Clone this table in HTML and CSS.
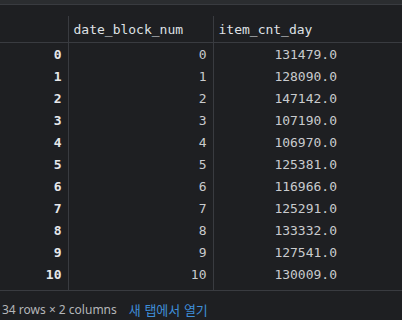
FILE: index.html
```html
<!DOCTYPE html>
<html lang="ko">
<head>
    <meta charset="UTF-8">
    <title>DataFrame</title>
    <link rel="stylesheet" href="styles.css">
</head>
<body>

<div class="topbar"></div>

<div class="frame">
    <table class="df">
        <colgroup>
            <col class="c-index">
            <col class="c-date">
            <col class="c-cnt">
            <col>
        </colgroup>
        <thead>
            <tr>
                <th class="sep"></th>
                <th class="sep">date_block_num</th>
                <th>item_cnt_day</th>
                <th></th>
            </tr>
        </thead>
        <tbody>
            <tr><td class="idx sep">0</td><td class="num sep">0</td><td class="num">131479.0</td><td></td></tr>
            <tr><td class="idx sep">1</td><td class="num sep">1</td><td class="num">128090.0</td><td></td></tr>
            <tr><td class="idx sep">2</td><td class="num sep">2</td><td class="num">147142.0</td><td></td></tr>
            <tr><td class="idx sep">3</td><td class="num sep">3</td><td class="num">107190.0</td><td></td></tr>
            <tr><td class="idx sep">4</td><td class="num sep">4</td><td class="num">106970.0</td><td></td></tr>
            <tr><td class="idx sep">5</td><td class="num sep">5</td><td class="num">125381.0</td><td></td></tr>
            <tr><td class="idx sep">6</td><td class="num sep">6</td><td class="num">116966.0</td><td></td></tr>
            <tr><td class="idx sep">7</td><td class="num sep">7</td><td class="num">125291.0</td><td></td></tr>
            <tr><td class="idx sep">8</td><td class="num sep">8</td><td class="num">133332.0</td><td></td></tr>
            <tr><td class="idx sep">9</td><td class="num sep">9</td><td class="num">127541.0</td><td></td></tr>
            <tr><td class="idx sep">10</td><td class="num sep">10</td><td class="num">130009.0</td><td></td></tr>
            <tr class="spacer"><td class="sep"></td><td class="sep"></td><td></td><td></td></tr>
        </tbody>
    </table>
</div>

<div class="footer">
    <span class="shape">34 rows × 2 columns</span>
    <a href="#" class="open-link">새 탭에서 열기</a>
</div>

</body>
</html>
```

FILE: styles.css
```css
body {
    margin: 0;
    background-color: #1e1f22;
    color: #cfd1d4;
}

.topbar {
    height: 4px;
    background-color: #2b2d30;
    border-bottom: 1px solid #393b40;
}

.frame {
    padding-top: 11px;
    border-bottom: 1px solid #393b40;
}

.df {
    width: 100%;
    border-collapse: collapse;
    table-layout: fixed;
    font-family: "DejaVu Sans Mono", monospace;
    font-size: 13px;
}

.c-index {
    width: 68px;
}

.c-date {
    width: 145px;
}

.c-cnt {
    width: 130px;
}

.df th {
    height: 26px;
    padding: 0 5px;
    text-align: left;
    font-weight: normal;
    color: #dfe1e5;
    border-bottom: 1px solid #393b40;
}

.df td {
    height: 22px;
    padding: 0 6px 0 5px;
    color: #c9cbce;
}

.df .sep {
    border-right: 1px solid #393b40;
}

.df .num {
    text-align: right;
}

.df .idx {
    text-align: right;
    font-weight: bold;
    color: #e6e7ea;
}

.df .spacer td {
    height: 5px;
}

.footer {
    display: flex;
    align-items: center;
    gap: 12px;
    height: 20px;
    padding: 9px 0 0 2px;
    font-family: "Noto Sans", "Noto Sans CJK KR", sans-serif;
    font-size: 12px;
    line-height: 16px;
}

.shape {
    color: #b4b6b9;
}

.open-link {
    color: #3f8ed8;
    font-size: 13px;
    text-decoration: none;
    font-family: "Noto Sans CJK KR", sans-serif;
}
```
